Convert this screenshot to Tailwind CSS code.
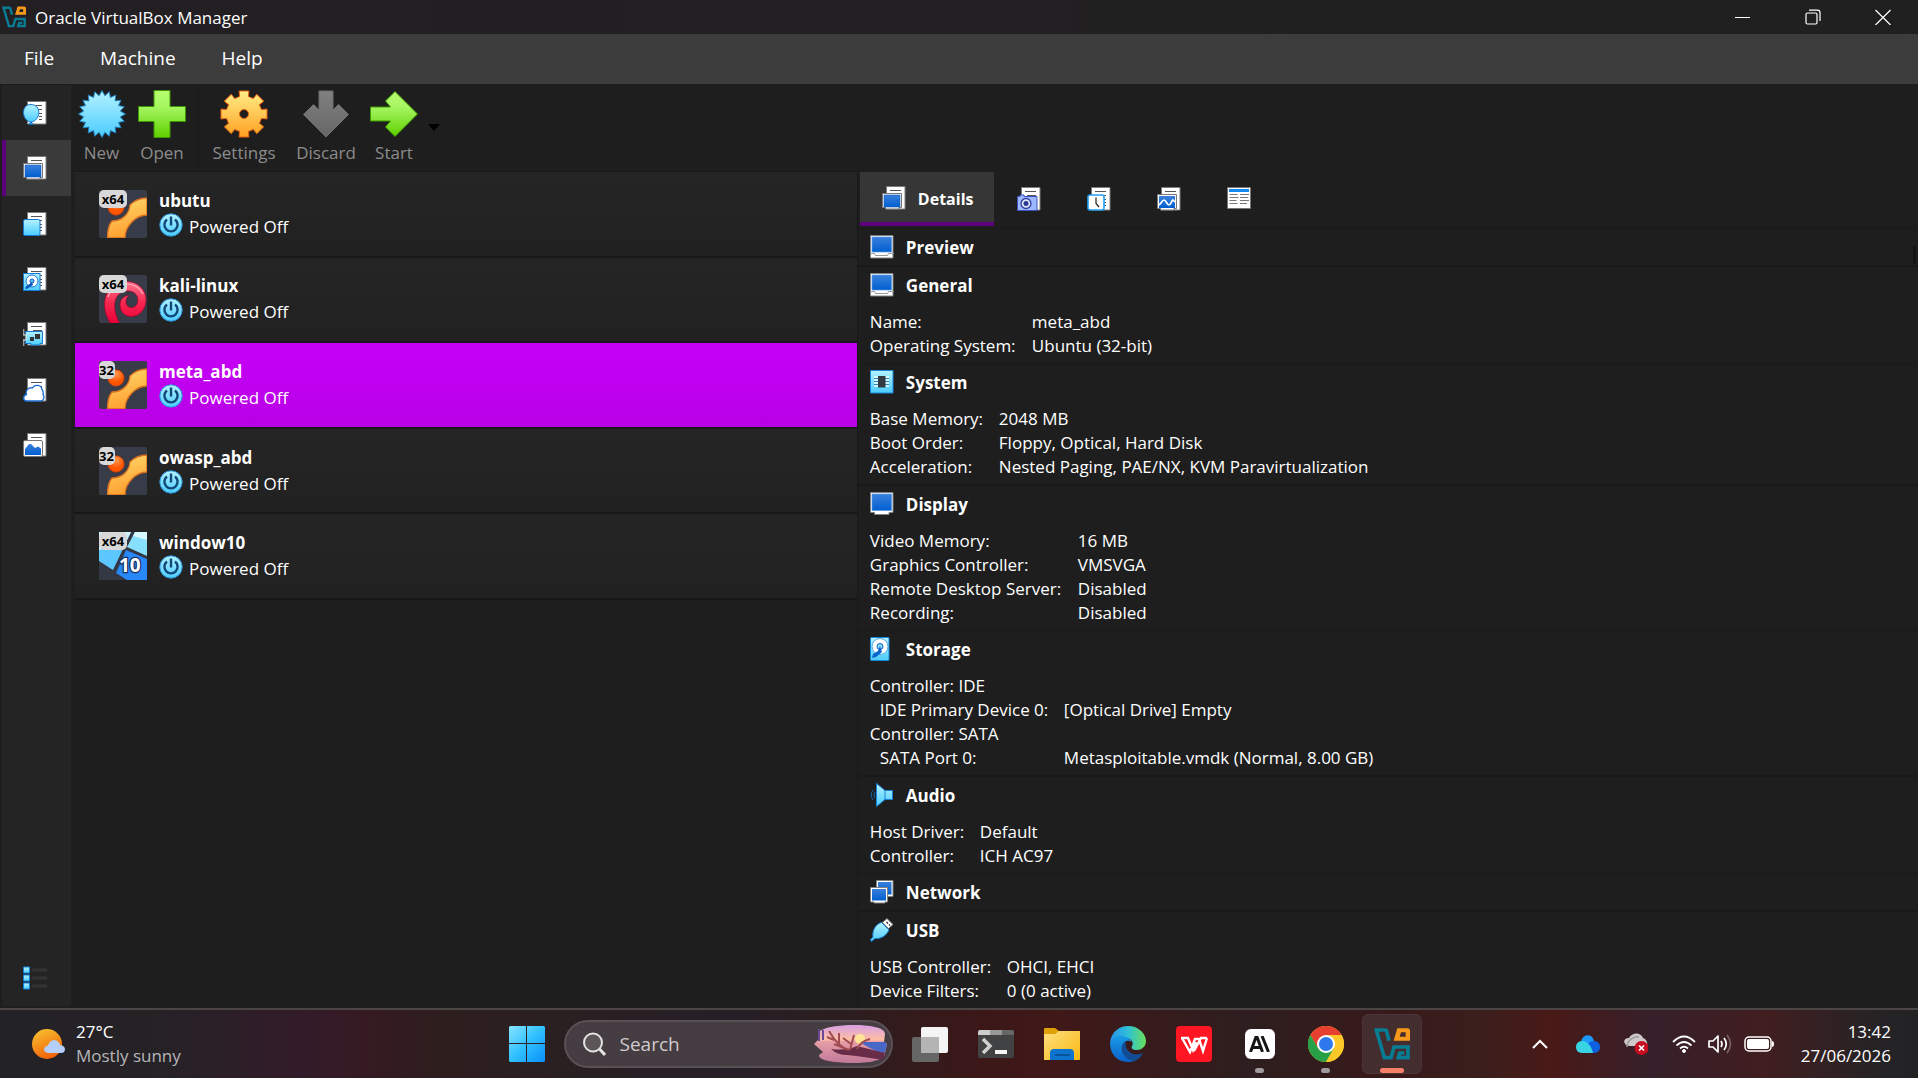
<!DOCTYPE html>
<html lang="en">
<head>
<meta charset="utf-8">
<meta name="viewport" content="width=device-width, initial-scale=1">
<title>Oracle VirtualBox Manager</title>
<script src="https://cdn.jsdelivr.net/npm/@tailwindcss/browser@4"></script>
</head>
<body class="flex min-h-screen flex-col bg-[#1e1e1e] font-['Open_Sans','Noto_Sans',sans-serif] text-[17px] text-white">

<!-- Shared artwork -->
<svg class="absolute size-0" aria-hidden="true">
  <defs>
    <linearGradient id="gCyan" x1="0" y1="0" x2="0" y2="1"><stop offset="0" stop-color="#b4f2ff"/><stop offset="1" stop-color="#4accff"/></linearGradient>
    <linearGradient id="gBlue" x1="0" y1="0" x2="0" y2="1"><stop offset="0" stop-color="#3a80dc"/><stop offset="1" stop-color="#005fd0"/></linearGradient>
    <linearGradient id="gGreen" x1="0" y1="0" x2="0" y2="1"><stop offset="0" stop-color="#b8ff70"/><stop offset=".35" stop-color="#a5f560"/><stop offset="1" stop-color="#60d000"/></linearGradient>
    <linearGradient id="gGold" x1="0" y1="0" x2="0" y2="1"><stop offset="0" stop-color="#ffee88"/><stop offset="1" stop-color="#ffa020"/></linearGradient>
    <linearGradient id="gGray" x1="0" y1="0" x2="0" y2="1"><stop offset="0" stop-color="#808080"/><stop offset="1" stop-color="#666666"/></linearGradient>
    <linearGradient id="gBand" x1="0" y1="0" x2=".3" y2="1"><stop offset="0" stop-color="#ffdc70"/><stop offset="1" stop-color="#ffa030"/></linearGradient>
    <linearGradient id="gRed" x1="0" y1="0" x2="0" y2="1"><stop offset="0" stop-color="#ff7890"/><stop offset=".5" stop-color="#f82850"/><stop offset="1" stop-color="#e80038"/></linearGradient>
    <radialGradient id="gBall" cx=".5" cy=".25"><stop offset="0" stop-color="#ff9a50"/><stop offset="1" stop-color="#ff5500"/></radialGradient>
    <symbol id="page" viewBox="0 0 24 24">
      <path d="M4.500.5h18.500v22.500H4.500z" fill="#fff" stroke="#7c7c7c"/>
      <path d="M8 4.500h11M10 8.500h9M16 12.500h3M16 15.500h3M16 18.500h3" stroke="#555"/>
    </symbol>
    <symbol id="doc-balloon" viewBox="0 0 24 24">
      <use href="#page"/><path d="M8 21l-2 2.500h4z" fill="#3ab8f0" stroke="#0a64c8"/>
      <path d="M8 3.500c5 0 7.800 3.500 7.800 8 0 5-4 9.500-7.800 9.500S.5 16.500.5 11.500c0-4.500 2.500-8 7.500-8z" fill="url(#gCyan)" stroke="#1878d0"/>
    </symbol>
    <symbol id="doc-screen" viewBox="0 0 24 24">
      <use href="#page"/><path d="M.5 7.500h19v14H17v1.500H3.500v-1.500H.5z" fill="#fff" stroke="#777"/><path d="M2 9h16v12H2z" fill="url(#gBlue)" stroke="#1a5cb8" stroke-width=".6"/>
    </symbol>
    <symbol id="doc-square" viewBox="0 0 24 24">
      <use href="#page"/><rect x=".5" y="7.500" width="16.500" height="16" rx="1.500" fill="url(#gCyan)" stroke="#1878d0"/>
    </symbol>
    <symbol id="doc-disk" viewBox="0 0 24 24">
      <use href="#page"/><rect x=".5" y="6.500" width="16.500" height="17" fill="url(#gCyan)" stroke="#1878d0"/><circle cx="9" cy="14" r="6" fill="#fff" stroke="#1878d0"/><circle cx="9" cy="14" r="2" fill="#5bb8f0" stroke="#0a5ac0"/><path d="M9 15l1 3-6 4-2-.5 1-2z" fill="#0a5ac0"/>
    </symbol>
    <symbol id="doc-card" viewBox="0 0 24 24">
      <use href="#page"/><path d="M2.500 9.500h17v12H17v1.500H8v-1.500H2.500z" fill="url(#gCyan)" stroke="#1878d0"/><path d="M.7 7v17" stroke="#999" stroke-width="1.400"/><path d="M0 13h3v5H0" fill="#333" stroke="#eee"/><path d="M7 15h4v4H7zM12 12h5v5h-5z" fill="#333"/>
    </symbol>
    <symbol id="doc-cloud" viewBox="0 0 24 24">
      <use href="#page"/><path d="M3.500 23C0 23-.5 17.500 3.500 16.500 2 12 6 9 9.500 10c2-4 9-3.500 9.500 1.500 1.500 2 1.500 3.500 1 5C22 19 20.500 23 17.500 23z" fill="#fff" stroke="#1a6ad0" stroke-width="1.300"/>
    </symbol>
    <symbol id="doc-chart" viewBox="0 0 24 24">
      <use href="#page"/><rect x=".5" y="7.500" width="19" height="16" rx="1.500" fill="#fff" stroke="#777"/><path d="M2 22v-6l4-5h2l4 4 3-1.500 3 2V22z" fill="url(#gBlue)"/>
    </symbol>
    <symbol id="doc-camera" viewBox="0 0 24 24">
      <use href="#page"/><path d="M3 9.500V8h4v1.500h13v14H.5v-14z" fill="#9db8ff" stroke="#3c50c0"/><circle cx="9" cy="16.500" r="5" fill="#dde6ff" stroke="#3040a0" stroke-width="1.300"/><circle cx="9" cy="16.500" r="2.500" fill="#2a3a90"/>
    </symbol>
    <symbol id="doc-clock" viewBox="0 0 24 24">
      <use href="#page"/><rect x="1" y="8" width="16" height="15" rx="2" fill="#fff" stroke="#1ea0f0" stroke-width="1.600"/><path d="M9 10.500v6l3 3.500" fill="none" stroke="#222" stroke-width="1.200"/>
    </symbol>
    <symbol id="doc-wave" viewBox="0 0 24 24">
      <use href="#page"/><path d="M.5 7.500h19v14H17v1.500H3.500v-1.500H.5z" fill="#fff" stroke="#777"/><path d="M2 9h16v12H2z" fill="url(#gBlue)"/><path d="M2 18c2-1 3-5 5-5s3 5 5 5 3-6 4-5l2 2" fill="none" stroke="#fff" stroke-width="1.700"/>
    </symbol>
    <symbol id="doc-log" viewBox="0 0 24 24">
      <path d="M.5.5h23v21H.5z" fill="#fff" stroke="#777"/><path d="M2 2h20v3H2z" fill="#1088f0"/><path d="M2.500 7.500h8M13 7.500h9M2.500 10.500h9M13 10.500h8M2.500 13.500h7M13 13.500h9M2.500 16.500h8M13 16.500h7" stroke="#777"/>
    </symbol>
    <symbol id="monitor" viewBox="0 0 24 24">
      <path d="M.5.5h22.500v22.500H.5z" fill="#fff" stroke="#808080"/><path d="M2 2h19.500v15H2z" fill="url(#gBlue)" stroke="#5a98e8" stroke-width=".7"/><path d="M0 18.500h4.500l1 2h12l1-2H24" fill="none" stroke="#999"/>
    </symbol>
    <symbol id="chip" viewBox="0 0 24 24">
      <path d="M.5.5h22.500v22.500H.5z" fill="url(#gCyan)" stroke="#1688dc"/><path d="M4 7h15M4 10h15M4 13h15M4 16h15" stroke="#eaffff" stroke-width="1.500"/><path d="M4 8.500h15M4 11.500h15M4 14.500h15" stroke="#3484b4"/><rect x="8" y="6" width="7.500" height="11.500" fill="#343a44"/>
    </symbol>
    <symbol id="display" viewBox="0 0 24 24">
      <path d="M.5.500h22.500v20H19v2H4.500v-2H.5z" fill="#fff" stroke="#808080"/><path d="M2 2h19.500v16.500H2z" fill="url(#gBlue)" stroke="#5a98e8" stroke-width=".7"/>
    </symbol>
    <symbol id="disk" viewBox="0 0 24 24">
      <rect x=".5" y=".5" width="18.500" height="23" rx="1" fill="url(#gCyan)" stroke="#1688dc"/><circle cx="10" cy="9.500" r="8" fill="#fff" stroke="#50a8e0"/><circle cx="10" cy="9.500" r="3" fill="#8adcff" stroke="#0a5cc8"/><path d="M10 9l2 6-6 5-4 1 1-4 5-3z" fill="#0b64cc"/>
    </symbol>
    <symbol id="speaker" viewBox="0 0 24 24">
      <path d="M6.500.5L15 7.500h7.500v9H15l-8.500 7z" fill="url(#gCyan)" stroke="#1680d8"/><path d="M15 7.500v9" stroke="#1680d8"/><path d="M5 9q-2 3 0 6M3 7q-3.500 5 0 10" fill="none" stroke="#1463b4"/>
    </symbol>
    <symbol id="network" viewBox="0 0 24 24">
      <path d="M6.500.5H23v16H6.500z" fill="#fff" stroke="#808080"/><path d="M8 2h13.500v12.500H8z" fill="url(#gBlue)"/><path d="M.5 7.500H17.500v14.500H15v1H4v-1H.5z" fill="#fff" stroke="#808080"/><path d="M2 9h14v11.500H2z" fill="url(#gBlue)"/>
    </symbol>
    <symbol id="usb" viewBox="0 0 24 24">
      <path d="M17 .5l6 6-4.500 4-6-6z" fill="#fff" stroke="#777"/><path d="M16.500 4l1.500 1.500M19 6.500l1 1" stroke="#333" stroke-width="1.500"/><path d="M11.500 4.500l7.500 7.500c-3 6-8 9-14 8.500L1.500 23.500l-1-2L3 19C2 12 6 6 11.500 4.500z" fill="url(#gCyan)" stroke="#1680d8"/>
    </symbol>
    <symbol id="power" viewBox="0 0 24 24">
      <circle cx="12" cy="12" r="11.200" fill="url(#gCyan)" stroke="#2a90d8"/><path d="M8 6.500a6.600 6.600 0 1 0 8 0M12 3.500v9" fill="none" stroke="#104878" stroke-width="2.400"/>
    </symbol>
    <symbol id="os-other" viewBox="0 0 48 48">
      <rect width="48" height="48" rx="2" fill="#383c48"/><circle cx="17" cy="17" r="8.200" fill="url(#gBall)" stroke="#b83810" stroke-width=".8"/>
      <path d="M8.500 48c0-8 1-13 4.500-17 8 0 17-5 18-16 5-5 11-7 17-7v17c-11 0-22 11-22 23z" fill="url(#gBand)" stroke="#d87020" stroke-width="1.300"/>
    </symbol>
    <symbol id="os-debian" viewBox="0 0 48 48">
      <rect width="48" height="48" rx="2" fill="#383c48"/>
      <path d="M11 48C-1 28 8 6.500 27 6.500c13 0 20 9 20 18C47 35 40 41.500 32 41.500c-6.500 0-11-5-11-11.500 0-5 3.500-9.500 9-9.500-4.500 3-4.500 12 2.500 12 5 0 7-5 6-10-1.500-5-6-7-11-6.500-12 1.500-16 15-7 32z" fill="url(#gRed)" stroke="#a80028" stroke-width=".7"/>
      <path d="M9 22c3-9 10-13 18-13 9 0 14 4 17 10" fill="none" stroke="#ffb0c0" stroke-width="1.200"/>
    </symbol>
    <symbol id="os-win" viewBox="0 0 48 48">
      <rect width="48" height="48" fill="#343844"/><path d="M0 0h32L14 38 0 29z" fill="#5cc8ff"/><path d="M0 0h32l-6 12L0 18z" fill="#d0f4ff"/><path d="M36 0h12v24L28 15z" fill="#88e0ff"/><path d="M27 18l21 9v21H28l-11-7z" fill="#2888f8"/>
      <path d="M48 0v8L34 4l2-4z" fill="#d8f8ff"/><text x="20" y="40" font-size="19" font-weight="700" fill="#fff" stroke="#183060" stroke-width="2.500" paint-order="stroke">10</text>
    </symbol>
    <symbol id="vbox" viewBox="0 0 108 96">
      <path d="M38 6H7l24 83h20l9-32h42v32H73l4-14h14M36 4l9 34" fill="none" stroke="#087c92" stroke-width="11"/><path d="M70 1h30q8 0 8 8v29H59zM81 13l-4 13h18V13z" fill="#f79a1c" fill-rule="evenodd"/>
    </symbol>
  </defs>
</svg>

<header>
  <div class="flex h-[34px] items-center bg-gradient-to-r from-[#231f23] to-[#202020]">
    <svg class="ml-[2px] size-6"><use href="#vbox"/></svg>
    <h1 class="ml-[9px] grow pt-px text-[17px]">Oracle VirtualBox Manager</h1>
    <button class="flex h-full w-[70px] items-center justify-center" aria-label="Minimize"><svg class="size-4" viewBox="0 0 16 16"><path d="M0 8.500h15" stroke="#fff"/></svg></button>
    <button class="flex h-full w-[70px] items-center justify-center" aria-label="Restore"><svg class="size-4" viewBox="0 0 16 16" fill="none" stroke="#fff" stroke-width="1.200"><rect x="1" y="4" width="11" height="11" rx="1.500"/><path d="M4 1.200h8.500q2.500 0 2.500 2.500V12"/></svg></button>
    <button class="flex h-full w-[70px] items-center justify-center" aria-label="Close"><svg class="size-4" viewBox="0 0 16 16"><path d="M.5 1l15 15M15.500 1l-15 15" stroke="#fff" stroke-width="1.200"/></svg></button>
  </div>
  <nav class="flex h-[50px] items-center gap-[46px] bg-[#3c3c3c] px-6 pb-[2px] text-[19px]" aria-label="Menu">
    <button>File</button><button>Machine</button><button>Help</button>
  </nav>
</header>

<main class="flex grow">
  <nav class="ml-[2px] mt-px mb-[2px] flex w-[69px] flex-col bg-[#242424]" aria-label="Tools">
    <div class="flex h-[388px] flex-col">
      <button class="flex flex-1 items-center justify-center pr-1" aria-label="Home"><svg class="size-6"><use href="#doc-balloon"/></svg></button>
      <button class="flex flex-1 items-center justify-center border-l-4 border-[#5c007c] bg-[#3a3a3a] pr-2" aria-label="Machines"><svg class="size-6"><use href="#doc-screen"/></svg></button>
      <button class="flex flex-1 items-center justify-center pr-1" aria-label="Extensions"><svg class="size-6"><use href="#doc-square"/></svg></button>
      <button class="flex flex-1 items-center justify-center pr-1" aria-label="Media"><svg class="size-6"><use href="#doc-disk"/></svg></button>
      <button class="flex flex-1 items-center justify-center pr-1" aria-label="Network"><svg class="size-6"><use href="#doc-card"/></svg></button>
      <button class="flex flex-1 items-center justify-center pr-1" aria-label="Cloud"><svg class="size-6"><use href="#doc-cloud"/></svg></button>
      <button class="flex flex-1 items-center justify-center pr-1" aria-label="Resources"><svg class="size-6"><use href="#doc-chart"/></svg></button>
    </div>
    <button class="mt-auto flex h-14 items-center justify-center pr-1" aria-label="Tool list">
      <svg class="size-6" viewBox="0 0 24 24"><g fill="url(#gCyan)" stroke="#1080e0"><path d="M.5 1h6v6h-6z"/><path d="M.5 9h6v6h-6z"/><path d="M.5 17h6v6h-6z"/></g><path d="M10 4h13M10 12h13M10 20h13" stroke="#343434" stroke-width="3" stroke-linecap="round"/></svg>
    </button>
  </nav>

  <div class="flex min-w-0 grow flex-col pl-1">
    <div class="flex h-[87px] pt-[6px] text-[17px] leading-[30px] text-[#8c8c8c]" role="toolbar">
      <button class="flex w-[53px] flex-col items-center"><svg class="size-12 shrink-0" viewBox="0 0 48 48"><path id="burst" fill="url(#gCyan)" stroke="#2080c0"/></svg>New</button>
      <button class="ml-[2px] flex w-16 flex-col items-center"><svg class="size-12 shrink-0" viewBox="0 0 48 48"><path d="M16 .5h16v16h15.500v15H32v16H16v-16H.5v-15H16z" fill="url(#gGreen)" stroke="#3c9800"/></svg>Open</button>
      <div class="ml-1 -mt-[2px] h-[78px] w-px bg-[#191919]"></div>
      <button class="ml-[5px] flex w-20 flex-col items-center"><svg class="size-12 shrink-0" viewBox="0 0 48 48"><path id="gear" fill="url(#gGold)" fill-rule="evenodd" stroke="#e86010"/></svg>Settings</button>
      <button class="ml-[2px] flex w-20 flex-col items-center"><svg class="size-12 shrink-0" viewBox="0 0 48 48"><path d="M17 1h14v19l5.500-5.500 10 10L24 47 1.500 24.500l10-10L17 20z" fill="url(#gGray)" stroke="#707070"/></svg>Discard</button>
      <button class="flex w-14 flex-col items-center"><svg class="size-12 shrink-0" viewBox="0 0 48 48"><path d="M.5 17h20l-5-6L25 1.500 47.500 24 25 46.500 15.500 37l5-6H.5z" fill="url(#gGreen)" stroke="#3c9800"/></svg>Start</button>
      <button class="flex h-[74px] w-6 items-center justify-center" aria-label="Start options"><svg class="w-3" viewBox="0 0 12 7"><path d="M0 0h12L6 7z" fill="#000"/></svg></button>
    </div>

    <div class="grid grow grid-cols-[18fr_24fr] max-[1200px]:grid-cols-1">
      <section class="min-w-0 border-r border-[#181818] min-[1201px]:w-[783px]" aria-label="Machines">
        <ul id="machines" class="flex h-[429px] flex-col border-t border-[#181818]"></ul>
      </section>

      <section class="flex min-w-0 flex-col min-[1201px]:-ml-[7px]" aria-label="Machine details">
        <div class="flex h-[57px] items-start pl-[2px] pt-px" role="tablist">
          <button role="tab" aria-selected="true" class="flex h-[54px] items-center gap-3 border-b-4 border-[#5c007c] bg-[#363636] pl-[22px] pr-[21px] pt-px text-base font-bold"><svg class="size-6"><use href="#doc-screen"/></svg><span class="pt-[2px]">Details</span></button>
          <button role="tab" aria-label="Snapshots" class="flex h-[54px] w-[70px] items-center justify-center"><svg class="size-6"><use href="#doc-camera"/></svg></button>
          <button role="tab" aria-label="Logs" class="flex h-[54px] w-[70px] items-center justify-center"><svg class="size-6"><use href="#doc-clock"/></svg></button>
          <button role="tab" aria-label="Activity" class="flex h-[54px] w-[70px] items-center justify-center"><svg class="size-6"><use href="#doc-wave"/></svg></button>
          <button role="tab" aria-label="File manager" class="flex h-[54px] w-[70px] items-center justify-center"><svg class="size-6"><use href="#doc-log"/></svg></button>
        </div>
        <div class="relative">
          <div id="details"></div>
          <div class="absolute right-[2px] top-[18px] h-[18px] w-[3px] bg-[#151515]"></div>
        </div>
      </section>
    </div>
  </div>
</main>

<footer id="taskbar" class="grid h-[70px] grid-cols-[1fr_auto_1fr] items-center border-t-2 border-[#4b4546] bg-[linear-gradient(90deg,#232226_0%,#252226_8%,#331b29_16%,#351a22_19%,#2e1e1e_23%,#292022_30%,#261f27_38%,#2c1e1f_44%,#3b1718_51%,#401818_55%,#2e1e1f_65%,#38191a_73%,#3a1f1d_77%,#491917_81%,#36202a_86%,#411e20_92%,#252325_98%,#222224_100%)]">
  <button class="flex items-center gap-[11px] pl-8 text-left">
    <svg class="h-[30px] w-[33px]" viewBox="0 0 33 30"><defs><linearGradient id="sun" x1=".2" y1="0" x2=".6" y2="1"><stop offset="0" stop-color="#f8c030"/><stop offset="1" stop-color="#f06008"/></linearGradient></defs><circle cx="15" cy="15" r="15" fill="url(#sun)"/><path d="M16 24q-4-.5-4-4 .5-3 4-3.500 1.500-5 6-5.500 5 .5 6 5 5 .5 5 4.500-.5 3.500-4 3.500z" fill="#b4d0fa"/></svg>
    <span class="text-[17px] leading-6"><span class="block">27°C</span><span class="block text-[#b8b5b8]">Mostly sunny</span></span>
  </button>

  <div class="flex h-full items-center">
    <button class="flex w-[66px] justify-center" aria-label="Start menu"><svg class="size-9" viewBox="0 0 36 36"><defs><linearGradient id="win" x1="0" y1="0" x2="1" y2="1"><stop offset="0" stop-color="#88e4ff"/><stop offset=".5" stop-color="#30c0ff"/><stop offset="1" stop-color="#0890f8"/></linearGradient></defs><path d="M1 0h16v17H0V1zM18 0h17l1 1v16H18zM0 18h17v18H1l-1-1zM18 18h18v17l-1 1H18z" fill="url(#win)"/></svg></button>
    <label class="mx-1 flex h-12 w-[329px] items-center rounded-full border-2 border-[#5a5156] bg-[#453d41] pl-4 pr-1">
      <svg class="size-6 shrink-0" viewBox="0 0 24 24" fill="none" stroke="#e4e4e4" stroke-width="2"><circle cx="11" cy="10.500" r="9" fill="#5c5659"/><path d="M17.500 17l5.500 6" stroke-width="3"/></svg>
      <input type="search" aria-label="Search" placeholder="Search" class="ml-[14px] w-0 grow bg-transparent text-[19px] outline-none placeholder:text-[#cfcbcd]">
      <svg class="h-[38px] w-[73px] shrink-0" viewBox="0 0 73 38"><defs><linearGradient id="sky" x1="0" y1="0" x2="0" y2="1"><stop offset="0" stop-color="#d8a0e4"/><stop offset=".4" stop-color="#ffc0a0"/><stop offset=".42" stop-color="#e8a0a8"/><stop offset="1" stop-color="#c07898"/></linearGradient></defs><path d="M4 8C8 2 26 0 40 0s31 2 31 9l-1 8 3 2-2 9c1 6-12 10-30 10S4 36 5 30l4-3-9-8 4-4z" fill="url(#sky)"/><path d="M45 17h26l2 3-3 10-14-7z" fill="#4868c8"/><circle cx="46" cy="14" r="5" fill="#ffe498"/><path d="M5 4v12M9 5v10" stroke="#6a4898" stroke-width="2"/><path d="M17 24q16 2 26-3 8 2 28 7l-2 7q-24-4-36-5-10 0-16-6z" fill="#682c48"/><path d="M35 25Q24 22 15 6M20 15l-7-3M25 20V8M36 25l4-15M37 19l-8-6M43 24q4-8 13-10M30 23L20 19" fill="none" stroke="#a04c50" stroke-width="2"/></svg>
    </label>
    <button class="flex w-[66px] justify-center" aria-label="Task view"><svg class="size-9" viewBox="0 0 36 36"><rect x="9" y="1" width="27" height="26" rx="2" fill="#f4f4f4"/><rect y="11" width="27" height="25" rx="2" fill="#666"/><path d="M9 11h18v16H9z" fill="#b4b4b4"/></svg></button>
    <button class="flex w-[66px] justify-center" aria-label="Terminal"><svg class="size-9" viewBox="0 0 36 36"><rect y="4" width="36" height="28" rx="2" fill="#404244"/><path d="M0 9V6q0-2 2-2h10v5z" fill="#ccc"/><path d="M12 4h12v5H12z" fill="#999"/><path d="M24 4h10q2 0 2 2v3H24z" fill="#666"/><path d="M5 13l7 7-7 7" fill="none" stroke="#d0d0d0" stroke-width="3.500"/><path d="M17 24h12v4H17z" fill="#f4f4f4"/></svg></button>
    <button class="flex w-[66px] justify-center" aria-label="File Explorer"><svg class="size-9" viewBox="0 0 36 36"><defs><linearGradient id="fold" x1="0" y1="0" x2="1" y2="1"><stop offset="0" stop-color="#ffdf80"/><stop offset="1" stop-color="#f8b810"/></linearGradient></defs><path d="M0 3q0-1 1-1h10l4 3h20v10H0z" fill="#e0a008"/><path d="M0 8h11l4-3h21v28q0 1-1 1H0z" fill="url(#fold)"/><path d="M6 34V27q0-4 4-4h16q4 0 4 4v7z" fill="#0c74cc"/><path d="M11 29h15" stroke="#084a8c" stroke-width="1.500"/></svg></button>
    <button class="flex w-[66px] justify-center" aria-label="Edge"><svg class="size-9" viewBox="0 0 36 36"><defs><linearGradient id="e1"><stop offset="0" stop-color="#2890e8"/><stop offset=".5" stop-color="#30c0d8"/><stop offset="1" stop-color="#68e058"/></linearGradient><linearGradient id="e2" x1="0" y1="0" x2="0" y2="1"><stop offset="0" stop-color="#1a9ce8"/><stop offset="1" stop-color="#0a60c8"/></linearGradient></defs><path d="M0 17C1 6 9 0 18 0c11 0 18 8 18 15 0 6-5 9-9 9-5 0-6-2-5-4 2-3 0-7-5-8C9 10 3 13 0 17z" fill="url(#e1)"/><path d="M0 17c2-5 7-8 12-7 5 0 9 4 10 6-5-3-9 0-9 5 0 7 6 14 13 13-3 2-6 2-8 2C8 36 0 29 0 17z" fill="url(#e2)"/><path d="M16 15c-8 4-5 18 8 20 4-1 7-4 9-8-9 4-19-1-17-12z" fill="#124c94"/></svg></button>
    <button class="flex w-[66px] justify-center" aria-label="WPS Office"><svg class="size-9" viewBox="0 0 36 36"><rect width="36" height="36" rx="4" fill="#ff1622"/><path d="M5 12h7l5 12 3-8M31 12h-6l-7 13M6 12l8 14 5-13h4l4 12 4-13" fill="none" stroke="#fff" stroke-width="2.400"/></svg></button>
    <button class="relative flex h-full w-[66px] items-center justify-center" aria-label="Assistant"><span class="flex size-[30px] items-center justify-center rounded-[6px] bg-white"><svg class="h-4 w-[22px]" viewBox="0 0 22 16" fill="none" stroke="#161616" stroke-width="3"><path d="M1.500 16L7 1h1l5.500 15M4 11.500h7M13 0l6.500 16"/></svg></span><span class="absolute bottom-[5px] h-[5px] w-[9px] rounded-full bg-[#a09a9c]"></span></button>
    <button class="relative flex h-full w-[66px] items-center justify-center" aria-label="Chrome"><svg class="size-9" viewBox="0 0 36 36"><circle cx="18" cy="18" r="18" fill="#fcc828"/><path d="M2.400 9A18 18 0 0 1 33.600 9H18l-7.800 13.500z" fill="#e84030"/><path d="M2.400 9A18 18 0 0 0 18 36l7.800-13.500H10.200z" fill="#28a048"/><path d="M18 9h15.600A18 18 0 0 1 18 36l7.800-13.500z" fill="#fcc828"/><circle cx="18" cy="18" r="9" fill="#fff"/><circle cx="18" cy="18" r="7" fill="#2c78ec"/></svg><span class="absolute bottom-[5px] h-[5px] w-[9px] rounded-full bg-[#a09a9c]"></span></button>
    <button class="relative mx-[3px] flex size-[60px] items-center justify-center rounded-md border border-[#4c3436] bg-[#432d2f]" aria-label="VirtualBox"><svg class="size-9"><use href="#vbox"/></svg><span class="absolute bottom-0 h-[5px] w-6 rounded-full bg-[#f88068]"></span></button>
  </div>

  <div class="flex items-center justify-end pr-[27px]">
    <button class="mr-7" aria-label="Show hidden icons"><svg class="h-[10px] w-4" viewBox="0 0 16 10"><path d="M1 9l7-7 7 7" fill="none" stroke="#fff" stroke-width="2"/></svg></button>
    <button class="mr-6" aria-label="OneDrive"><svg class="h-[18px] w-6" viewBox="0 0 24 18"><path d="M5 6C7-1 16-2 18 6l-6 8z" fill="#1c98f8"/><path d="M18 6c4 0 6 3 6 6s-2 6-6 6H6l6-9q2-3 6-3z" fill="#0c60e0"/><path d="M6 6c4 0 9 3 11 12H6c-4 0-6-3-6-6s2-6 6-6z" fill="#38d4e4"/></svg></button>
    <button class="mr-6" aria-label="Sync error"><svg class="h-[22px] w-6" viewBox="0 0 24 22"><path d="M5 5C8-1 17-1 19 5c3 1 5 4 4 8H6c-7 0-8-8-1-8z" fill="#cfcaca"/><path d="M3 14C3 8 9 3 15 4" fill="none" stroke="#999" stroke-width="1.500"/><circle cx="17.500" cy="15" r="7" fill="#c80c20"/><path d="M15 12.500l5 5M20 12.500l-5 5" stroke="#fff" stroke-width="1.700"/></svg></button>
    <button class="flex items-center gap-3" aria-label="Network, volume and battery">
      <svg class="h-[18px] w-6" viewBox="0 0 24 18" fill="none" stroke="#fff" stroke-width="1.800"><path d="M1 7Q12-4 23 7M4.500 10.500q7.500-7 15 0M8 13.500q4-3.500 8 0"/><circle cx="12" cy="16" r="1.500" fill="#fff" stroke-width="1"/></svg>
      <svg class="h-5 w-6" viewBox="0 0 24 20" fill="none" stroke="#fff" stroke-width="1.700"><path d="M1 7h4l5-5v16l-5-5H1z" stroke-linejoin="round"/><path d="M13 7q2 3 0 6M16 4q4.500 6 0 12"/><path d="M19 1q7 9 0 18" stroke="#786060"/></svg>
      <svg class="h-4 w-[30px]" viewBox="0 0 30 16"><rect x="1" y="1" width="26" height="14" rx="4" fill="none" stroke="#fff" stroke-width="1.500"/><rect x="3" y="3" width="22" height="10" rx="2" fill="#fff"/><path d="M28 5q2 0 2 3t-2 3z" fill="#fff"/></svg>
    </button>
    <button class="ml-[27px] text-right text-[17px] leading-6"><time class="block">13:42</time><time class="block">27/06/2026</time></button>
  </div>
</footer>

<script>
  // Toothed outlines for the toolbar's burst and gear
  const points = (n, fn) => 'M' + Array.from({ length: n }, (_, i) => fn(i).map(v => v.toFixed(1)).join(' ')).join('L') + 'Z';
  document.getElementById('burst').setAttribute('d', points(40, i => {
    const a = i * Math.PI / 20 - Math.PI / 2, r = i % 2 ? 18.5 : 23.5;
    return [24 + r * Math.cos(a), 24 + r * Math.sin(a)];
  }));
  document.getElementById('gear').setAttribute('d', points(32, i => {
    const a = (Math.floor(i / 4) * 45 - 90 + [-14, -12, 12, 14][i % 4]) * Math.PI / 180, r = [18, 23.5, 23.5, 18][i % 4];
    return [24 + r * Math.cos(a), 24 + r * Math.sin(a)];
  }) + 'M28.500 24a4.500 4.500 0 1 0-9 0a4.500 4.500 0 1 0 9 0');

  const machines = [
    ['ubutu', 'os-other', 'x64'], ['kali-linux', 'os-debian', 'x64'], ['meta_abd', 'os-other', '32'],
    ['owasp_abd', 'os-other', '32'], ['window10', 'os-win', 'x64'],
  ];
  document.getElementById('machines').innerHTML = machines.map(([name, os, bits]) => `
    <li class="flex-1 border-b-2 border-[#181818] ${name === 'meta_abd' ? 'bg-linear-to-b from-[#c600f8] to-[#b800e6]' : 'bg-linear-to-b from-[#252525] to-[#212121]'}">
      <button class="flex h-full w-full items-center gap-3 pl-6 text-left">
        <span class="relative"><svg class="size-12"><use href="#${os}"/></svg>
          <span class="absolute left-0 top-0 rounded-[5px] bg-[#d8d8d8] text-[13px] font-bold leading-[18px] text-black ${bits === '32' ? 'w-4' : 'w-7 text-center'}">${bits}</span></span>
        <span class="block pt-[2px]"><span class="block text-[17px] font-bold leading-6">${name}</span>
          <span class="flex items-center gap-[6px] leading-7"><svg class="-mt-1 size-6"><use href="#power"/></svg>Powered Off</span></span>
      </button>
    </li>`).join('');

  const sections = [
    ['Preview', 'monitor', '', []],
    ['General', 'monitor', 'w-[162px]', [['Name:', 'meta_abd'], ['Operating System:', 'Ubuntu (32-bit)']]],
    ['System', 'chip', 'w-[129px]', [['Base Memory:', '2048 MB'], ['Boot Order:', 'Floppy, Optical, Hard Disk'], ['Acceleration:', 'Nested Paging, PAE/NX, KVM Paravirtualization']]],
    ['Display', 'display', 'w-[208px]', [['Video Memory:', '16 MB'], ['Graphics Controller:', 'VMSVGA'], ['Remote Desktop Server:', 'Disabled'], ['Recording:', 'Disabled']]],
    ['Storage', 'disk', 'w-[194px]', [['Controller: IDE', ''], ['>IDE Primary Device 0:', '[Optical Drive] Empty'], ['Controller: SATA', ''], ['>SATA Port 0:', 'Metasploitable.vmdk (Normal, 8.00 GB)']]],
    ['Audio', 'speaker', 'w-[110px]', [['Host Driver:', 'Default'], ['Controller:', 'ICH AC97']]],
    ['Network', 'network', '', []],
    ['USB', 'usb', 'w-[137px]', [['USB Controller:', 'OHCI, EHCI'], ['Device Filters:', '0 (0 active)']]],
  ];
  document.getElementById('details').innerHTML = sections.map(([title, icon, width, rows], i) => `
    <section class="border-[#191919] pl-3 ${i % 2 ? 'border-t-2' : 'border-t'}">
      <h2 class="flex h-9 items-center gap-3 text-[17px] font-bold"><svg class="size-6"><use href="#${icon}"/></svg><span class="pt-[2px]">${title}</span></h2>
      ${rows.length ? `<table class="mt-[7px] mb-[5px] text-[17px] leading-6">${rows.map(([k, v]) => `
        <tr><th scope="row" class="${width} p-0 text-left font-normal whitespace-nowrap ${k[0] === '>' ? 'pl-[10px]' : ''}">${k.replace('>', '')}</th><td class="p-0">${v}</td></tr>`).join('')}</table>` : ''}
    </section>`).join('');
</script>
</body>
</html>
